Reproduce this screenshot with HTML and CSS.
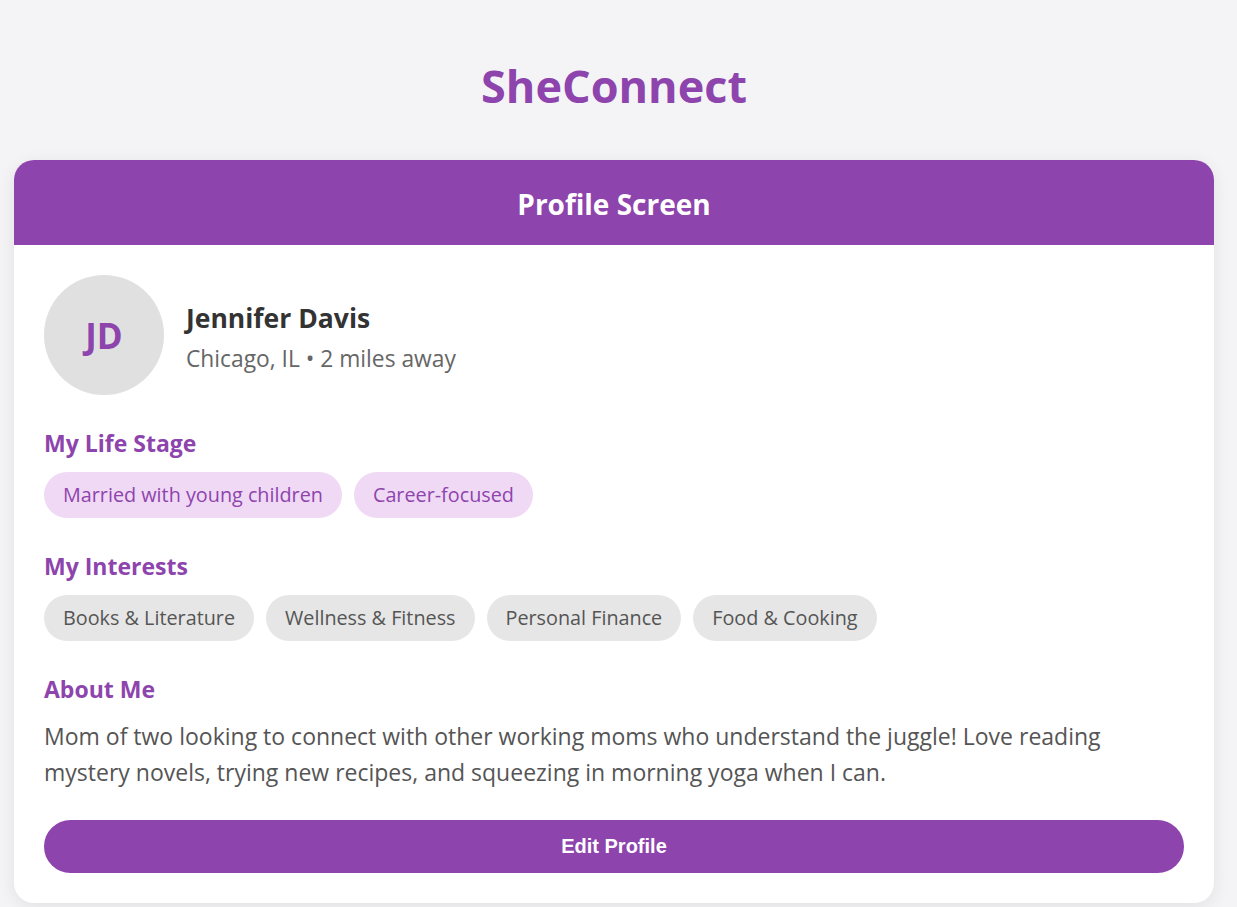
FILE: index.html
```html
<!DOCTYPE html>
<html lang="en">
<head>
<meta charset="utf-8">
<title>SheConnect</title>
<link rel="stylesheet" href="styles.css">
</head>
<body>
<h1 class="app-title">SheConnect</h1>
<div class="card">
  <div class="card-header">Profile Screen</div>
  <div class="card-body">
    <div class="profile-top">
      <div class="avatar">JD</div>
      <div class="profile-info">
        <div class="profile-name">Jennifer Davis</div>
        <div class="profile-location">Chicago, IL • 2 miles away</div>
      </div>
    </div>
    <div class="section">
      <h2 class="section-title">My Life Stage</h2>
      <div class="chips">
        <span class="chip chip-stage">Married with young children</span>
        <span class="chip chip-stage">Career-focused</span>
      </div>
    </div>
    <div class="section">
      <h2 class="section-title">My Interests</h2>
      <div class="chips">
        <span class="chip chip-interest">Books &amp; Literature</span>
        <span class="chip chip-interest">Wellness &amp; Fitness</span>
        <span class="chip chip-interest">Personal Finance</span>
        <span class="chip chip-interest">Food &amp; Cooking</span>
      </div>
    </div>
    <div class="section about">
      <h2 class="section-title">About Me</h2>
      <p class="about-text">Mom of two looking to connect with other working moms who understand the juggle! Love reading mystery novels, trying new recipes, and squeezing in morning yoga when I can.</p>
    </div>
    <button class="edit-btn">Edit Profile</button>
  </div>
</div>
</body>
</html>
```
FILE: styles.css
```css
* { box-sizing: border-box; }
body {
  margin: 0;
  padding: 57px 23px 40px 14px;
  background: #f4f4f6;
  font-family: "Open Sans", "Noto Sans", sans-serif;
  color: #333;
}
.app-title {
  margin: 0 0 45px;
  text-align: center;
  font-size: 45px;
  line-height: 58px;
  font-weight: 700;
  color: #8e44ad;
}
.card {
  background: #fff;
  border-radius: 20px;
  box-shadow: 0 4px 18px rgba(0, 0, 0, 0.08);
  overflow: hidden;
}
.card-header {
  background: #8e44ad;
  color: #fff;
  height: 85px;
  padding-top: 2px;
  display: flex;
  align-items: center;
  justify-content: center;
  font-size: 28px;
  font-weight: 700;
}
.card-body {
  padding: 30px;
}
.profile-top {
  display: flex;
  align-items: center;
  gap: 22px;
  margin-bottom: 30px;
}
.avatar {
  width: 120px;
  height: 120px;
  border-radius: 50%;
  background: #e0e0e0;
  color: #8e44ad;
  font-size: 35px;
  font-weight: 700;
  display: flex;
  align-items: center;
  justify-content: center;
  flex-shrink: 0;
}
.profile-info {
  padding-top: 4px;
}
.profile-name {
  font-size: 26.5px;
  line-height: 36px;
  font-weight: 700;
  color: #333;
  margin-bottom: 7px;
}
.profile-location {
  font-size: 22.8px;
  line-height: 32px;
  color: #666;
}
.section { margin-bottom: 30px; }
.section.about { margin-bottom: 30px; }
.section-title {
  margin: 0 0 11px;
  font-size: 23px;
  line-height: 36px;
  font-weight: 700;
  color: #8e44ad;
}
.chips {
  display: flex;
  flex-wrap: wrap;
  gap: 12px;
}
.chip {
  display: inline-block;
  padding: 8px 19px;
  border-radius: 23px;
  font-size: 19.8px;
  line-height: 30px;
}
.chip-stage { background: #f0d9f5; color: #8e44ad; }
.chip-interest { background: #e6e6e6; color: #555; }
.about-text {
  margin: 0;
  padding-right: 12px;
  font-size: 23px;
  line-height: 36px;
  color: #555;
}
.edit-btn {
  display: block;
  width: 100%;
  height: 53px;
  border: none;
  border-radius: 27px;
  background: #8e44ad;
  color: #fff;
  font-family: "Liberation Sans", Arial, sans-serif;
  font-size: 20px;
  font-weight: 700;
  cursor: pointer;
}
```
